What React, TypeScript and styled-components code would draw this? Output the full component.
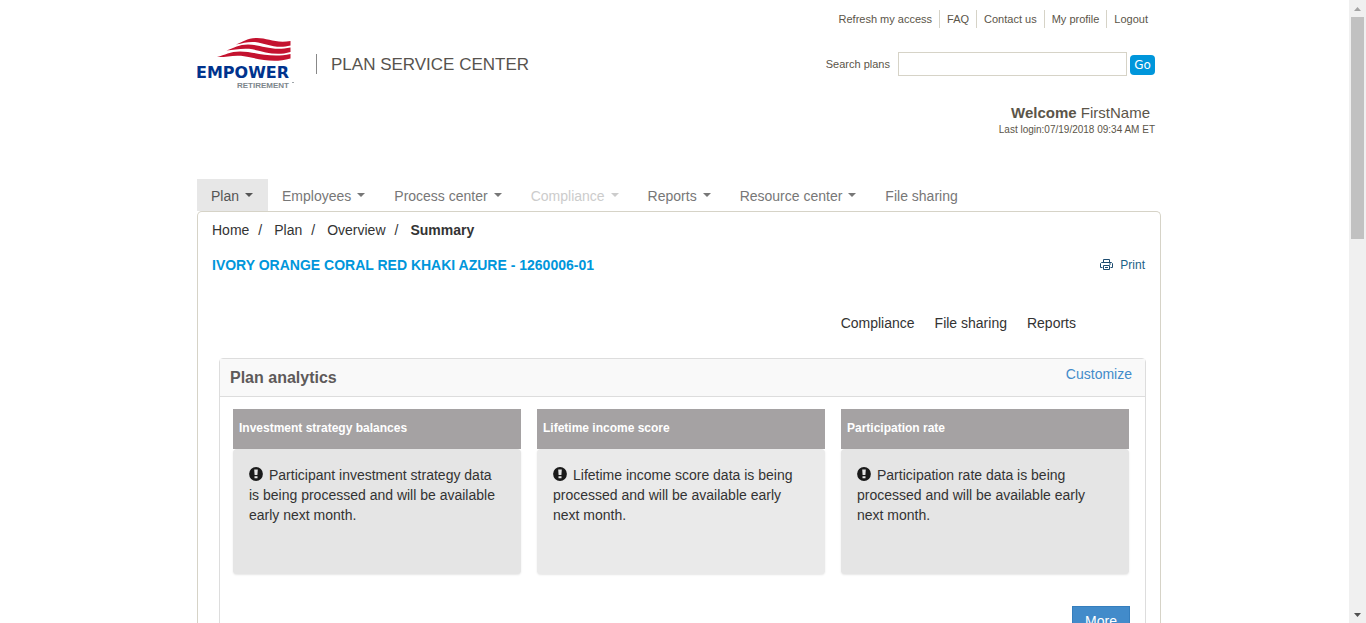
import React from "react";
import styled, { createGlobalStyle } from "styled-components";

const GlobalStyle = createGlobalStyle`
  * { box-sizing: border-box; }
  body {
    margin: 0;
    background: #fff;
    color: #333;
    font-family: "Liberation Sans", Arial, sans-serif;
    font-size: 14px;
    line-height: 20px;
  }
  a { color: inherit; text-decoration: none; }
  ul, ol { margin: 0; padding: 0; list-style: none; }
  h1, h2, h3, p { margin: 0; }
`;

const Shell = styled.div`
  display: flex;
  height: 100vh;
  overflow: hidden;
`;

const Page = styled.div`
  flex: 1;
  min-width: 0;
  overflow: hidden;
`;

const Container = styled.div`
  max-width: 973px;
  margin: 0 auto;
  padding-left: 9px;
`;

const Header = styled.header`
  display: flex;
  justify-content: space-between;
  height: 179px;
  color: #5b5549;
`;

const Brand = styled.div`
  display: flex;
  align-items: flex-start;
  padding-top: 36px;
`;

const BrandName = styled.div`
  margin: 18px 0 0 21px;
  padding: 1px 0 0 14px;
  border-left: 1px solid #888;
  font-size: 17px;
  line-height: 19px;
  color: #57534e;
`;

const Tools = styled.div`
  display: flex;
  flex-direction: column;
  align-items: flex-end;
  padding: 10px 6px 0 0;
`;

const UtilityList = styled.ul`
  display: flex;
  font-size: 11px;
  line-height: 18px;

  li { padding: 0 7px; }
  li + li { border-left: 1px solid #d6d3c7; }
`;

const SearchForm = styled.form`
  display: flex;
  align-items: center;
  margin-top: 24px;
  font-size: 11px;
`;

const SearchInput = styled.input`
  width: 229px;
  height: 24px;
  margin: 0 3px 0 8px;
  padding: 2px 4px;
  border: 1px solid #d6d3c7;
  background: #fff;
`;

const GoButton = styled.button`
  width: 25px;
  height: 20px;
  margin-top: 2px;
  padding: 0;
  border: 0;
  border-radius: 4px;
  background: #0096db;
  color: #fff;
  font: 12px/20px "DejaVu Sans", sans-serif;
`;

const Welcome = styled.p`
  margin-top: 27px;
  padding-right: 5px;
  font-size: 15px;
  line-height: 20px;
`;

const LastLogin = styled.p`
  font-size: 10px;
  line-height: 14px;
`;

const NavList = styled.ul`
  display: flex;
`;

const NavLink = styled.a<{ $active?: boolean; $disabled?: boolean }>`
  display: flex;
  align-items: center;
  height: 32px;
  padding: 2px 15px 0 14px;
  background: ${(p) => (p.$active ? "#e7e7e7" : "transparent")};
  color: ${(p) => (p.$active ? "#555" : p.$disabled ? "#ccc" : "#777")};
`;

const Caret = styled.span`
  margin: 0 0 2px 6px;
  border-top: 4px solid currentColor;
  border-right: 4px solid transparent;
  border-left: 4px solid transparent;
`;

const Content = styled.main`
  padding: 8px 14px 0;
  border: 1px solid #d6d3c7;
  border-bottom: 0;
  border-radius: 5px 5px 0 0;
`;

const Crumbs = styled.ol`
  display: flex;

  li + li::before {
    content: "/";
    padding: 0 12px 0 9px;
  }
  li[aria-current] { font-weight: bold; }
  li[aria-current]::before { font-weight: normal; }
`;

const TitleRow = styled.div`
  display: flex;
  justify-content: space-between;
  margin-top: 15px;
`;

const PlanTitle = styled.h1`
  font-size: 14px;
  line-height: 20px;
  color: #0096db;
`;

const PrintLink = styled.a`
  display: flex;
  align-items: center;
  gap: 7px;
  padding-right: 1px;
  font-size: 12px;
  color: #1b6288;
`;

const QuickLinks = styled.ul`
  display: flex;
  justify-content: flex-end;
  gap: 20px;
  margin-top: 38px;
  padding-right: 70px;
`;

const Panel = styled.section`
  margin: 25px 0 0 7px;
  border: 1px solid #ddd;
  border-radius: 4px;
`;

const PanelHeader = styled.div`
  display: flex;
  justify-content: space-between;
  height: 38px;
  padding: 5px 13px 0 10px;
  border-bottom: 1px solid #ddd;
  background: #f9f9f9;
`;

const PanelTitle = styled.h2`
  padding-top: 4px;
  font-size: 16px;
  line-height: 20px;
  color: #5e5a5a;
`;

const BlueLink = styled.a`
  color: #428bca;
`;

const CardGrid = styled.div`
  display: grid;
  grid-template-columns: repeat(3, 1fr);
  gap: 16px;
  padding: 12px 16px 0 13px;
`;

const CardTitle = styled.h3`
  height: 40px;
  padding: 9px 6px;
  background: #a5a2a3;
  color: #fff;
  font-size: 12px;
  line-height: 20px;
`;

const CardBody = styled.div<{ $light?: boolean }>`
  min-height: 125px;
  padding: 16px;
  border-radius: 4px;
  background: ${(p) => (p.$light ? "#eaeaea" : "#e5e5e5")};
  box-shadow: 0 1px 2px rgba(0, 0, 0, 0.1);

  svg {
    margin-right: 6px;
    vertical-align: -1px;
  }
`;

const PanelFooter = styled.div`
  display: flex;
  justify-content: flex-end;
  padding: 32px 15px 20px;
`;

const MoreButton = styled.button`
  height: 30px;
  padding: 4px 12px;
  border: 1px solid #357ebd;
  background: #428bca;
  color: #fff;
  font: 14px/20px "Liberation Sans", Arial, sans-serif;
`;

const ScrollTrack = styled.div`
  display: flex;
  flex-direction: column;
  align-items: center;
  width: 17px;
  background: #f0f0f0;
`;

const ScrollThumb = styled.div`
  width: 13px;
  height: 222px;
  margin-bottom: auto;
  background: #c1c1c1;
`;

const ScrollArrow = styled.svg`
  display: block;
  width: 7px;
  height: 4px;
  margin: 7px 0 6px;
  flex: none;
`;

const Logo = () => (
  <svg width="98" height="54" viewBox="196 36 98 54" role="img" aria-label="Empower Retirement">
    <g fill="#c4122f">
      <path d="M235 44.500C242 42 246 38 256 38C267 38 274 43.500 289.500 41V45.500C275 49.500 265 43.500 254 42C247 41.500 242 43 235 44.500Z" />
      <path d="M225.500 50.500C233 48 238 44.500 247 44.500C260 44.500 270 51.500 289.500 47.500V52C273 57 261 50.500 248 48.800C239 48.300 233 49.800 225.500 50.500Z" />
      <path d="M216 57C224 55 229 51.500 239 51.500C254 51.500 268 58.500 289.500 54V58.500C270 64 256 58 240 55.800C231 55 224 57.500 216 57Z" />
    </g>
    <text x="195" y="78" fill="#00338d" fontFamily="DejaVu Sans, sans-serif" fontWeight="700" fontSize="16">EMPOWER</text>
    <text x="236" y="88" fill="#7d868c" fontFamily="Liberation Sans, sans-serif" fontWeight="700" fontSize="8">RETIREMENT</text>
    <path d="M291 82.500h2" stroke="#a0a6aa" />
  </svg>
);

const PrinterIcon = () => (
  <svg width="13" height="12" viewBox="0 0 13 12" fill="none" stroke="#1d4c70" aria-hidden="true">
    <path d="M3.500 4V.5h6V4M2.500 8.500h-2v-4l1-1h10l1 1v4h-2M3.500 6.500h6v4h-6zM5 8.500h3M9 5h2" />
  </svg>
);

const AlertIcon = () => (
  <svg width="14" height="14" viewBox="0 0 14 14" aria-hidden="true">
    <circle cx="7" cy="7" r="6.900" fill="#1a1a1a" />
    <path d="M5.200 2.500h3.600l-.4 5.500H5.600z M5.500 9.200h3v2.100h-3z" fill="#e5e5e5" />
  </svg>
);

const utilityLinks = ["Refresh my access", "FAQ", "Contact us", "My profile", "Logout"];

const navItems = [
  { label: "Plan", menu: true, active: true },
  { label: "Employees", menu: true },
  { label: "Process center", menu: true },
  { label: "Compliance", menu: true, disabled: true },
  { label: "Reports", menu: true },
  { label: "Resource center", menu: true },
  { label: "File sharing", menu: false },
];

const cards = [
  {
    title: "Investment strategy balances",
    text: "Participant investment strategy data is being processed and will be available early next month.",
  },
  {
    title: "Lifetime income score",
    text: "Lifetime income score data is being processed and will be available early next month.",
    light: true,
  },
  {
    title: "Participation rate",
    text: "Participation rate data is being processed and will be available early next month.",
  },
];

export default function App() {
  return (
    <>
      <GlobalStyle />
      <Shell>
        <Page>
          <Container>
            <Header>
              <Brand>
                <Logo />
                <BrandName>PLAN SERVICE CENTER</BrandName>
              </Brand>
              <Tools>
                <UtilityList>
                  {utilityLinks.map((label) => (
                    <li key={label}><a href="#">{label}</a></li>
                  ))}
                </UtilityList>
                <SearchForm>
                  <label htmlFor="plan-search">Search plans</label>
                  <SearchInput id="plan-search" type="text" />
                  <GoButton type="button">Go</GoButton>
                </SearchForm>
                <Welcome><strong>Welcome</strong> FirstName</Welcome>
                <LastLogin>Last login:07/19/2018 09:34 AM ET</LastLogin>
              </Tools>
            </Header>
            <nav>
              <NavList>
                {navItems.map((item) => (
                  <li key={item.label}>
                    <NavLink href="#" $active={item.active} $disabled={item.disabled}>
                      {item.label}
                      {item.menu && <Caret />}
                    </NavLink>
                  </li>
                ))}
              </NavList>
            </nav>
            <Content>
              <Crumbs>
                <li><a href="#">Home</a></li>
                <li><a href="#">Plan</a></li>
                <li><a href="#">Overview</a></li>
                <li aria-current="page">Summary</li>
              </Crumbs>
              <TitleRow>
                <PlanTitle>IVORY ORANGE CORAL RED KHAKI AZURE - 1260006-01</PlanTitle>
                <PrintLink href="#"><PrinterIcon />Print</PrintLink>
              </TitleRow>
              <QuickLinks>
                <li><a href="#">Compliance</a></li>
                <li><a href="#">File sharing</a></li>
                <li><a href="#">Reports</a></li>
              </QuickLinks>
              <Panel>
                <PanelHeader>
                  <PanelTitle>Plan analytics</PanelTitle>
                  <BlueLink href="#">Customize</BlueLink>
                </PanelHeader>
                <CardGrid>
                  {cards.map((card) => (
                    <article key={card.title}>
                      <CardTitle>{card.title}</CardTitle>
                      <CardBody $light={card.light}>
                        <p><AlertIcon />{card.text}</p>
                      </CardBody>
                    </article>
                  ))}
                </CardGrid>
                <PanelFooter>
                  <MoreButton type="button">More</MoreButton>
                </PanelFooter>
              </Panel>
            </Content>
          </Container>
        </Page>
        <ScrollTrack aria-hidden="true">
          <ScrollArrow viewBox="0 0 7 4"><path d="M3.500 0L7 4H0z" fill="#a3a3a3" /></ScrollArrow>
          <ScrollThumb />
          <ScrollArrow viewBox="0 0 7 4"><path d="M3.500 4L7 0H0z" fill="#505050" /></ScrollArrow>
        </ScrollTrack>
      </Shell>
    </>
  );
}
